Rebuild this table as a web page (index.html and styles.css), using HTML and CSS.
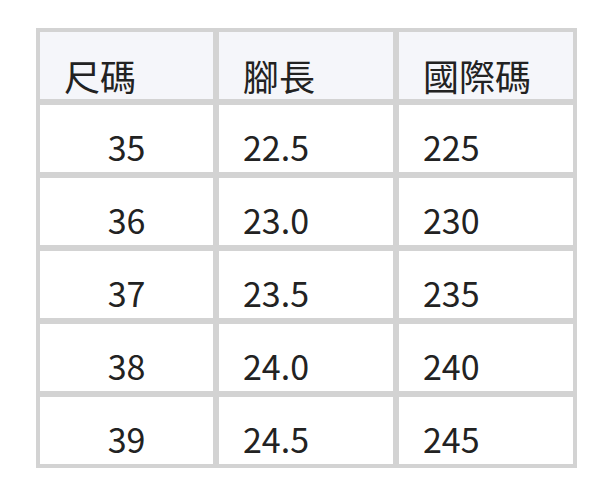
FILE: index.html
```html
<!DOCTYPE html>
<html lang="zh-Hant">
<head>
<meta charset="utf-8">
<title>尺碼表</title>
<link rel="stylesheet" href="styles.css">
</head>
<body>
<table class="size-table">
  <colgroup>
    <col class="col-size">
    <col class="col-foot">
    <col class="col-intl">
  </colgroup>
  <thead>
    <tr><th>尺碼</th><th>腳長</th><th>國際碼</th></tr>
  </thead>
  <tbody>
    <tr><td class="num">35</td><td>22.5</td><td>225</td></tr>
    <tr><td class="num">36</td><td>23.0</td><td>230</td></tr>
    <tr><td class="num">37</td><td>23.5</td><td>235</td></tr>
    <tr><td class="num">38</td><td>24.0</td><td>240</td></tr>
    <tr><td class="num">39</td><td>24.5</td><td>245</td></tr>
  </tbody>
</table>
</body>
</html>
```

FILE: styles.css
```css
html, body {
  margin: 0;
  background: #ffffff;
}
body {
  padding: 28px 36px;
  font-family: "Noto Sans CJK TC", "Noto Sans", sans-serif;
  color: #222222;
}
.size-table {
  table-layout: fixed;
  width: 541px;
  border-collapse: separate;
  border-spacing: 2px;
  background: #d3d3d3;
}
.col-size { width: 177px; }
.col-foot { width: 178px; }
.col-intl { width: 178px; }
.size-table th,
.size-table td {
  border: 2px solid #d3d3d3;
  background: #ffffff;
  font-size: 34px;
  font-weight: 400;
  line-height: 49px;
  height: 49px;
  padding: 17px 24px 1px;
  text-align: left;
  vertical-align: top;
  white-space: nowrap;
}
.size-table th {
  background: #f5f6fa;
  font-size: 36px;
  line-height: 48px;
  height: 48px;
  padding: 19px 24px 0;
}
.size-table td.num {
  text-align: center;
}
```
